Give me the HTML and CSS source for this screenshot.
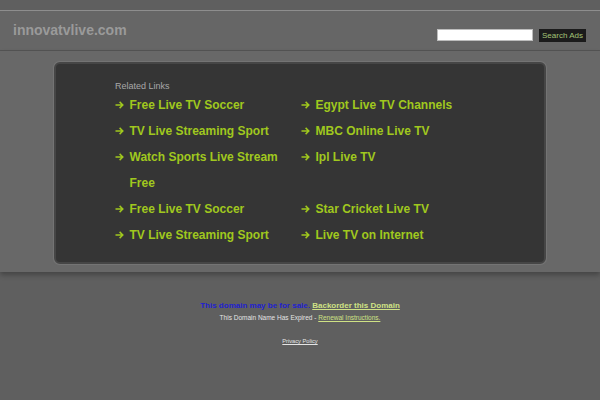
FILE: index.html
```html
<!DOCTYPE html>
<html>
<head>
<meta charset="utf-8">
<title>innovatvlive.com</title>
<link rel="stylesheet" href="styles.css">
</head>
<body>
<div class="topstrip"></div>
<header class="header">
  <div class="title">innovatvlive.com</div>
  <form class="search">
    <input class="search-input" type="text">
    <button class="search-btn" type="button">Search Ads</button>
  </form>
</header>
<main class="main">
  <div class="box">
    <div class="related">Related Links</div>
    <div class="links">
      <a class="link"><span class="arrow"><svg width="9" height="8" viewBox="0 0 9 8"><path d="M0.5 4H7.8M4.6 0.9L7.8 4L4.6 7.1" fill="none" stroke="#a0c81e" stroke-width="1.5"/></svg></span><span class="txt">Free Live TV Soccer</span></a>
      <a class="link"><span class="arrow"><svg width="9" height="8" viewBox="0 0 9 8"><path d="M0.5 4H7.8M4.6 0.9L7.8 4L4.6 7.1" fill="none" stroke="#a0c81e" stroke-width="1.5"/></svg></span><span class="txt">Egypt Live TV Channels</span></a>
      <a class="link"><span class="arrow"><svg width="9" height="8" viewBox="0 0 9 8"><path d="M0.5 4H7.8M4.6 0.9L7.8 4L4.6 7.1" fill="none" stroke="#a0c81e" stroke-width="1.5"/></svg></span><span class="txt">TV Live Streaming Sport</span></a>
      <a class="link"><span class="arrow"><svg width="9" height="8" viewBox="0 0 9 8"><path d="M0.5 4H7.8M4.6 0.9L7.8 4L4.6 7.1" fill="none" stroke="#a0c81e" stroke-width="1.5"/></svg></span><span class="txt">MBC Online Live TV</span></a>
      <a class="link"><span class="arrow"><svg width="9" height="8" viewBox="0 0 9 8"><path d="M0.5 4H7.8M4.6 0.9L7.8 4L4.6 7.1" fill="none" stroke="#a0c81e" stroke-width="1.5"/></svg></span><span class="txt">Watch Sports Live Stream Free</span></a>
      <a class="link"><span class="arrow"><svg width="9" height="8" viewBox="0 0 9 8"><path d="M0.5 4H7.8M4.6 0.9L7.8 4L4.6 7.1" fill="none" stroke="#a0c81e" stroke-width="1.5"/></svg></span><span class="txt">Ipl Live TV</span></a>
      <a class="link"><span class="arrow"><svg width="9" height="8" viewBox="0 0 9 8"><path d="M0.5 4H7.8M4.6 0.9L7.8 4L4.6 7.1" fill="none" stroke="#a0c81e" stroke-width="1.5"/></svg></span><span class="txt">Free Live TV Soccer</span></a>
      <a class="link"><span class="arrow"><svg width="9" height="8" viewBox="0 0 9 8"><path d="M0.5 4H7.8M4.6 0.9L7.8 4L4.6 7.1" fill="none" stroke="#a0c81e" stroke-width="1.5"/></svg></span><span class="txt">Star Cricket Live TV</span></a>
      <a class="link"><span class="arrow"><svg width="9" height="8" viewBox="0 0 9 8"><path d="M0.5 4H7.8M4.6 0.9L7.8 4L4.6 7.1" fill="none" stroke="#a0c81e" stroke-width="1.5"/></svg></span><span class="txt">TV Live Streaming Sport</span></a>
      <a class="link"><span class="arrow"><svg width="9" height="8" viewBox="0 0 9 8"><path d="M0.5 4H7.8M4.6 0.9L7.8 4L4.6 7.1" fill="none" stroke="#a0c81e" stroke-width="1.5"/></svg></span><span class="txt">Live TV on Internet</span></a>
    </div>
  </div>
</main>
<footer class="footer">
  <div class="sale"><span class="sale-text">This domain may be for sale.</span> <a class="sale-link">Backorder this Domain</a></div>
  <div class="expired">This Domain Name Has Expired - <a class="renew">Renewal Instructions.</a></div>
  <div class="privacy"><a class="privacy-link">Privacy Policy</a></div>
</footer>
</body>
</html>
```

FILE: styles.css
```css
html, body {
  margin: 0;
  padding: 0;
}
body {
  background: #5f5f5f;
  font-family: "Liberation Sans", Arial, sans-serif;
  width: 600px;
  height: 400px;
  overflow: hidden;
}
.topstrip {
  height: 10px;
  background: #5f5f5f;
}
.header {
  height: 39px;
  background: #666666;
  border-top: 1px solid #8e8e8e;
  border-bottom: 1px solid #545454;
  display: flex;
  justify-content: space-between;
  align-items: flex-start;
  padding: 0 14px 0 13px;
}
.title {
  margin-top: 11px;
  font-size: 14px;
  line-height: 16px;
  font-weight: bold;
  color: #9a9a9a;
}
.search {
  margin: 18px 0 0;
  display: flex;
  align-items: flex-start;
  gap: 6px;
}
.search-input {
  box-sizing: border-box;
  width: 96px;
  height: 12px;
  margin: 0;
  padding: 0;
  border: 1px solid #bdbdbd;
  background: #ffffff;
}
.search-btn {
  box-sizing: border-box;
  width: 47px;
  height: 13px;
  margin: 0;
  padding: 0;
  border: none;
  background: #1b1b1b;
  color: #a3c476;
  font-family: "Liberation Sans", Arial, sans-serif;
  font-size: 8px;
  line-height: 13px;
}
.main {
  background: #686868;
  padding: 11px 54px 8px;
  box-shadow: 0 3px 5px rgba(0, 0, 0, 0.28);
  position: relative;
}
.box {
  background: #353535;
  border: 2px solid #464646;
  border-radius: 6px;
  box-shadow: 0 0 1px 1px #767676;
  padding: 16px 20px 14px 59px;
}
.related {
  font-size: 9px;
  line-height: 12px;
  color: #a8a8a8;
}
.links {
  display: grid;
  grid-template-columns: 186px 1fr;
}
.link {
  display: flex;
  align-items: flex-start;
  color: #a0c81e;
  font-size: 12px;
  font-weight: bold;
  line-height: 26px;
  text-decoration: none;
}
.arrow {
  flex: none;
  width: 14.5px;
  height: 26px;
  display: flex;
  align-items: center;
}
.arrow svg {
  display: block;
}
.txt {
  flex: 1;
}
.footer {
  text-align: center;
  padding-top: 28px;
}
.sale {
  font-size: 8px;
  line-height: 12px;
  font-weight: bold;
}
.sale-text {
  color: #1f1fd0;
}
.sale-link {
  color: #cfe285;
  text-decoration: underline;
}
.expired {
  font-size: 6.5px;
  line-height: 12px;
  color: #e4e4e4;
}
.renew {
  color: #cfe285;
  text-decoration: underline;
}
.privacy {
  margin-top: 11px;
  font-size: 5.7px;
  line-height: 12px;
}
.privacy-link {
  color: #e4e4e4;
  text-decoration: underline;
}
```
